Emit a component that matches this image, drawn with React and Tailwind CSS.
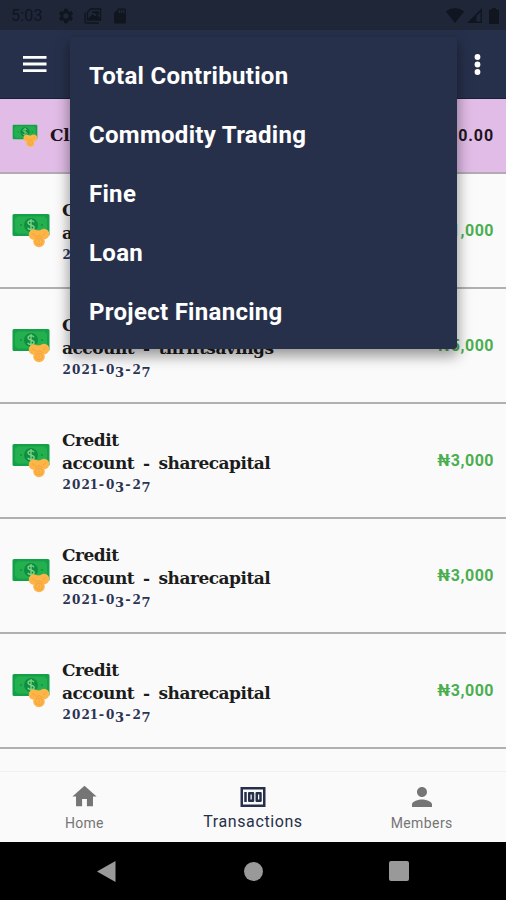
import React from 'react';
import { MdHome, MdMoney, MdPerson, MdSdCard, MdSettings } from 'react-icons/md';

const transactions = [
  { type: 'Credit', account: 'account - thriftsavings', date: '2021-03-27', amount: '₦1,000' },
  { type: 'Credit', account: 'account - thriftsavings', date: '2021-03-27', amount: '₦5,000' },
  { type: 'Credit', account: 'account - sharecapital', date: '2021-03-27', amount: '₦3,000' },
  { type: 'Credit', account: 'account - sharecapital', date: '2021-03-27', amount: '₦3,000' },
  { type: 'Credit', account: 'account - sharecapital', date: '2021-03-27', amount: '₦3,000' },
];

const menuItems = ['Total Contribution', 'Commodity Trading', 'Fine', 'Loan', 'Project Financing'];

const MoneyIcon = ({ className }) => (
  <svg viewBox="0 0 38 36" className={className}>
    <rect x="0.5" y="1" width="37" height="22" rx="1.5" fill="#14a048" />
    <path d="M5 3.5h28a2 2 0 0 0 2 2v13a2 2 0 0 0-2 2H5a2 2 0 0 0-2-2v-13a2 2 0 0 0 2-2z" fill="#24b04e" />
    <circle cx="19" cy="12" r="7" fill="#0f8e42" />
    <path d="M22 9.2c-.6-1.2-1.700-1.600-3-1.600-1.800 0-3 .8-3 2.200 0 3.100 6.200 1.400 6.200 4.500 0 1.500-1.400 2.200-3.200 2.200-1.500 0-2.800-.5-3.300-1.800M19 6v12" fill="none" stroke="#7ed684" strokeWidth="1.3" />
    <circle cx="9" cy="12" r="1.1" fill="#129344" />
    <circle cx="30" cy="12" r="1.1" fill="#129344" />
    <g fill="#fdb548">
      <circle cx="32" cy="21" r="5.3" />
      <circle cx="22" cy="21.5" r="5.300" />
      <circle cx="27" cy="28.500" r="5.800" />
      <circle cx="27" cy="22" r="4.800" />
    </g>
    <g fill="none" stroke="#f2a03c" strokeWidth="0.9">
      <circle cx="27" cy="28.500" r="3.400" />
      <path d="M27 26.500v4M20 20.500l4 2.500M31 22l3-2.500M23.500 24.500l3.500-2 3.500 2" />
    </g>
  </svg>
);

// old-style figures: 0, 1 and 2 sit at x-height, the rest hang below the line
const OldStyleDate = ({ value }) => (
  <div className="flex h-[21px] items-baseline font-['DejaVu_Serif',serif] text-[13px] leading-[19px] font-bold text-[#2b3354]">
    {value.split('').map((char, index) => {
      if (char === '-') return <span key={index} className="flex w-[8px] justify-center">-</span>;
      if (char === '1') return <span key={index} className="flex w-[7px] justify-center text-[12px]">1</span>;
      if ('02'.includes(char)) {
        return <span key={index} className="flex w-[9.500px] justify-center text-[12px]">{char}</span>;
      }
      return <span key={index} className="flex w-[9px] translate-y-[3px] justify-center">{char}</span>;
    })}
  </div>
);

const StatusBar = () => (
  <div className="flex h-[30px] items-center bg-[#1e2638] pt-px pl-[11px] pr-[7px] text-[#10151f]">
    <span className="w-[46px] text-[16px] tracking-[0.2px]">5:03</span>
    <MdSettings className="size-[18px]" />
    <svg viewBox="0 0 18 16" className="ml-[9px] h-[16px] w-[18px]" fill="none" stroke="currentColor" strokeWidth="1.4">
      <path d="M1 4.500v9a1.500 1.500 0 0 0 1.500 1.500H15" />
      <path d="M6.500 1H16.500v11H3.500V4z" />
      <path d="M5 11l3.500-4 2.500 2.500 2-2 2.500 3.500zM8 4h6v3" fill="currentColor" />
    </svg>
    <MdSdCard className="ml-[9px] size-[18px]" />
    <div className="ml-auto flex items-center gap-[3px]">
      <svg viewBox="0 0 18 15" className="h-[15px] w-[18px]" fill="currentColor">
        <path d="M0 3.500C5-.8 13-.8 18 3.500L9 15z" />
      </svg>
      <svg viewBox="0 0 15 15" className="h-[15px] w-[15px]" fill="currentColor">
        <path d="M0 15L15 0v15H9.500V8v5.500h4V4L9.500 8v7z" fillRule="evenodd" />
      </svg>
      <svg viewBox="0 0 10 16" className="ml-[4px] h-[16px] w-[10px]" fill="currentColor">
        <path d="M3 0h4v1.500h2a1 1 0 0 1 1 1V15a1 1 0 0 1-1 1H1a1 1 0 0 1-1-1V2.500a1 1 0 0 1 1-1h2z" />
      </svg>
    </div>
  </div>
);

const App = () => {
  return (
    <div className="relative flex h-[900px] w-[506px] flex-col overflow-hidden bg-[#fafafa] font-['Roboto',sans-serif]">
      <StatusBar />
      <header className="flex h-[69px] shrink-0 items-center justify-between border-b border-[#17203a] bg-[#27304b] pl-[23px] pr-[25px] text-white">
        <svg viewBox="0 0 24 16" className="h-[16px] w-[24px]" fill="currentColor">
          <path d="M0 0h23.500v2.800H0zM0 6.600h23.500v2.800H0zM0 13.200h23.500V16H0z" />
        </svg>
        <svg viewBox="0 0 7 21" className="h-[21px] w-[7px]" fill="currentColor">
          <circle cx="3.500" cy="3" r="2.900" />
          <circle cx="3.500" cy="10.500" r="2.900" />
          <circle cx="3.500" cy="18" r="2.900" />
        </svg>
      </header>

      <div className="flex h-[75px] shrink-0 items-center border-b-2 border-[#b3aab4] bg-[#e1bce6] pl-[12px] pr-[12px]">
        <MoneyIcon className="h-[24px] w-[26px]" />
        <span className="ml-[12px] font-['DejaVu_Serif',serif] text-[17px] font-bold tracking-[-0.2px] text-[#1d1420]">Closing Balance</span>
        <span className="ml-auto pt-px text-[16px] font-bold tracking-[0.9px] text-[#1d1420]">₦1,000.00</span>
      </div>

      <main className="flex-1 overflow-hidden">
        {transactions.map((item, index) => (
          <div key={index} className="flex h-[115px] items-center border-b-2 border-[#b0b0b0] pl-[12px] pr-[12px]">
            <MoneyIcon className="h-[36px] w-[38px]" />
            <div className="ml-[12px] pt-[4px] font-['DejaVu_Serif',serif] text-[#1c1c1c]">
              <div className="text-[17px] leading-[23px] font-bold tracking-[-0.5px]">{item.type}</div>
              <div className="text-[17px] leading-[23px] font-bold tracking-[-0.5px] whitespace-nowrap [word-spacing:3.500px]">{item.account}</div>
              <OldStyleDate value={item.date} />
            </div>
            <span className="ml-auto pt-px text-[16px] font-bold tracking-[0.5px] text-[#4bae50]">{item.amount}</span>
          </div>
        ))}
      </main>

      <nav className="grid h-[71px] shrink-0 grid-cols-3 border-t border-[#f0f0f0] bg-[#fafafa] text-[#757575]">
        <div className="flex flex-col items-center pt-[10px]">
          <MdHome className="size-[29px]" />
          <span className="mt-[2px] text-[14px] leading-[20px] tracking-[0.3px]">Home</span>
        </div>
        <div className="flex flex-col items-center pt-[10px] text-[#27304b]">
          <MdMoney className="size-[30px]" />
          <span className="text-[16px] leading-[20px] tracking-[0.6px] whitespace-nowrap">Transactions</span>
        </div>
        <div className="flex flex-col items-center pt-[10px]">
          <MdPerson className="size-[30px]" />
          <span className="mt-px text-[14px] leading-[20px] tracking-[0.4px]">Members</span>
        </div>
      </nav>

      <footer className="flex h-[58px] shrink-0 items-center justify-between bg-black pl-[97px] pr-[97px]">
        <svg viewBox="0 0 19 21" className="h-[21px] w-[19px]" fill="#999">
          <path d="M18.500 0v21L0 10.500z" />
        </svg>
        <div className="ml-px size-[19px] rounded-full bg-[#999]" />
        <div className="size-[20px] rounded-[2px] bg-[#999]" />
      </footer>

      <div className="absolute top-[37px] left-[70px] flex h-[312px] w-[387px] flex-col rounded-[3px] bg-[#27304b] pt-[9px] shadow-[0_6px_14px_1px_rgba(0,0,0,0.4)]">
        {menuItems.map((label) => (
          <div key={label} className="flex h-[59px] items-center pl-[19px] text-[24px] font-bold tracking-[0.3px] text-white">
            {label}
          </div>
        ))}
      </div>
    </div>
  );
};

export default App;
